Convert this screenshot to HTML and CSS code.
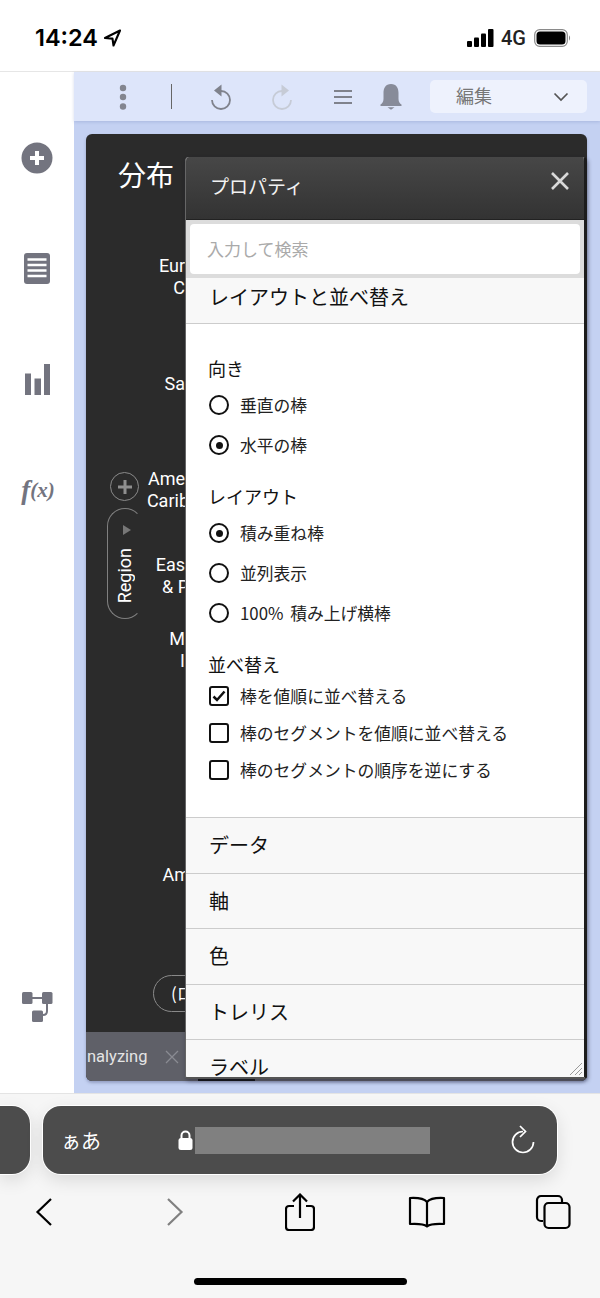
FILE: index.html
```html
<!DOCTYPE html>
<html lang="ja">
<head>
    <meta charset="utf-8">
    <title>プロパティ</title>
    <link rel="stylesheet" href="styles.css">
</head>
<body>
    <!-- status bar -->
    <div class="status-bar">
        <div class="status-time">
            <span>14:24</span>
            <svg width="19" height="18" viewBox="0 0 19 18"><path d="M17 1.500 2 9l7.500 .6L10.500 16.500Z" fill="none" stroke="#000" stroke-width="2.100" stroke-linejoin="round"/></svg>
        </div>
        <div class="status-right">
            <svg width="27" height="18" viewBox="0 0 27 18"><rect x="0" y="12" width="5" height="6" rx="1"/><rect x="7" y="8.500" width="5" height="9.500" rx="1"/><rect x="14" y="4.500" width="5" height="13.500" rx="1"/><rect x="21" y="0" width="5.500" height="18" rx="1"/></svg>
            <span class="status-net">4G</span>
            <svg width="37" height="18" viewBox="0 0 37 18"><rect x=".7" y=".7" width="32.600" height="16.600" rx="5" fill="none" stroke="#8a8a8a" stroke-width="1.200"/><rect x="2.500" y="2.500" width="29" height="13" rx="3.500"/><path d="M35 6.500c1.400 .6 1.400 4.400 0 5Z" fill="#8a8a8a"/></svg>
        </div>
    </div>

    <div class="app">
        <!-- left rail -->
        <div class="sidebar">
            <div class="side-item">
                <svg width="32" height="32" viewBox="0 0 32 32"><circle cx="16" cy="16" r="15.500" fill="#73747f"/><path d="M16 9v14M9 16h14" stroke="#fff" stroke-width="4"/></svg>
            </div>
            <div class="side-item">
                <svg width="26" height="31" viewBox="0 0 26 31"><rect width="26" height="31" rx="3" fill="#73747f"/><path d="M3.500 6.500h19M3.500 12h19M3.500 17.500h19M3.500 23h19" stroke="#fff" stroke-width="2.600"/></svg>
            </div>
            <div class="side-item">
                <svg width="25" height="31" viewBox="0 0 25 31"><path d="M0 9.500h6V31H0ZM9.500 14.500h6.500V31H9.500ZM19 0h6v31h-6Z" fill="#73747f"/></svg>
            </div>
            <div class="side-item fx"><i class="fx-f">f</i><i class="fx-x">(x)</i></div>
            <div class="side-item side-bottom">
                <svg width="32" height="32" viewBox="0 0 32 32"><g fill="#73747f"><rect x="1" y="0" width="10.500" height="12" rx="1.500"/><rect x="21" y="0" width="10.500" height="12" rx="1.500"/><rect x="11" y="18.500" width="11" height="11.500" rx="1.500"/></g><path d="M11 6h10M26 11v8q0 4-4 4" fill="none" stroke="#73747f" stroke-width="2"/></svg>
            </div>
        </div>

        <div class="workspace">
            <!-- toolbar -->
            <div class="toolbar">
                <div class="tool">
                    <svg width="10" height="26" viewBox="0 0 10 26"><circle cx="5" cy="4" r="3.200"/><circle cx="5" cy="13" r="3.200"/><circle cx="5" cy="22.500" r="3.200"/></svg>
                </div>
                <div class="tool"><div class="tool-sep"></div></div>
                <div class="tool">
                    <svg width="24" height="26" viewBox="0 0 24 26"><path d="M12 7a9 9 0 1 1-9 9" fill="none" stroke="#7f828c" stroke-width="1.800"/><path d="M12.500 .5v12L5 6.500Z" fill="#7f828c"/></svg>
                </div>
                <div class="tool">
                    <svg width="24" height="26" viewBox="0 0 24 26"><path d="M12 7a9 9 0 1 0 9 9" fill="none" stroke="#c6cbd6" stroke-width="1.800"/><path d="M11.500 .5v12L19 6.500Z" fill="#c6cbd6"/></svg>
                </div>
                <div class="tool">
                    <svg width="18" height="16" viewBox="0 0 18 16"><path d="M0 2h18M0 8h18M0 14h18" stroke="#7f828c" stroke-width="2"/></svg>
                </div>
                <div class="tool">
                    <svg width="22" height="26" viewBox="0 0 22 26"><path d="M11 0C5.500 0 3.500 4 3.500 9v6c0 3-1.500 4.500-3 5.500V22h21v-1.500c-1.500-1-3-2.500-3-5.500V9C18.500 4 16.500 0 11 0Z" fill="#878b99"/><path d="M7.500 23.200h7L11 25.800Z" fill="#878b99"/></svg>
                </div>
                <div class="mode-select">
                    <span>編集</span>
                    <svg width="16" height="10" viewBox="0 0 16 10"><path d="M1.500 1.500 8 8l6.500-6.500" fill="none" stroke="#555" stroke-width="1.700"/></svg>
                </div>
            </div>

            <!-- chart panel behind the dialog -->
            <div class="panel">
                <div class="chart">
                    <div class="chart-title">分布</div>
                    <div class="chart-row">
                        <div class="axis-col">
                            <div class="axis-add">
                                <svg width="14" height="14" viewBox="0 0 14 14"><path d="M7 0v14M0 7h14" stroke="#8f8f8f" stroke-width="3"/></svg>
                            </div>
                            <div class="axis-pill">
                                <span class="axis-arrow"></span>
                                <span class="axis-name">Region</span>
                            </div>
                        </div>
                        <div class="cats">
                            <div class="cat cat-1">Eur<br>C</div>
                            <div class="cat cat-2">Sa</div>
                            <div class="cat cat-3">Ame<br><span class="cut">Carib</span></div>
                            <div class="cat cat-4">Eas<br><span class="cut">&amp; P</span></div>
                            <div class="cat cat-5">M<br>I</div>
                            <div class="cat cat-6">Am</div>
                        </div>
                    </div>
                    <div class="legend-pill">(ロ</div>
                </div>
                <div class="tab-strip">
                    <span class="tab-name">nalyzing</span>
                    <svg width="14" height="14" viewBox="0 0 14 14"><path d="M1 1l12 12M13 1 1 13" stroke="#8a8b92" stroke-width="1.300"/></svg>
                    <div class="tab-mark"></div>
                </div>
            </div>

            <!-- properties dialog -->
            <div class="dialog">
                <div class="dialog-head">
                    <span>プロパティ</span>
                    <svg width="20" height="20" viewBox="0 0 20 20"><path d="M2 2l16 16M18 2 2 18" stroke="#d8d8d8" stroke-width="2.600"/></svg>
                </div>
                <div class="dialog-search">
                    <input type="text" placeholder="入力して検索">
                </div>
                <div class="section-row section-open">レイアウトと並べ替え</div>
                <div class="section-body">
                    <div class="group-title">向き</div>
                    <div class="opt"><span class="radio"></span>垂直の棒</div>
                    <div class="opt"><span class="radio on"></span>水平の棒</div>

                    <div class="group-title">レイアウト</div>
                    <div class="opt"><span class="radio on"></span>積み重ね棒</div>
                    <div class="opt"><span class="radio"></span>並列表示</div>
                    <div class="opt"><span class="radio"></span>100% 積み上げ横棒</div>

                    <div class="group-title group-last">並べ替え</div>
                    <div class="opt opt-check">
                        <span class="check"><svg width="14" height="12" viewBox="0 0 14 12"><path d="M1.500 6.500 5 10l7.500-8.500" fill="none" stroke="#111" stroke-width="2.500"/></svg></span>棒を値順に並べ替える
                    </div>
                    <div class="opt opt-check"><span class="check"></span>棒のセグメントを値順に並べ替える</div>
                    <div class="opt opt-check"><span class="check"></span>棒のセグメントの順序を逆にする</div>
                </div>
                <div class="section-row">データ</div>
                <div class="section-row">軸</div>
                <div class="section-row">色</div>
                <div class="section-row">トレリス</div>
                <div class="section-row">ラベル</div>
                <svg class="grip" width="14" height="14" viewBox="0 0 14 14"><path d="M1 13 13 1M6 13l7-7M10 13l3-3" stroke="#9a9a9a" stroke-width="1"/></svg>
            </div>
        </div>
    </div>

    <!-- browser chrome -->
    <div class="browser">
        <div class="address-row">
            <div class="tab-peek"></div>
            <div class="address">
                <span class="address-aa">ぁあ</span>
                <svg class="address-lock" width="15" height="20" viewBox="0 0 15 20"><path d="M3.500 9V5.500a4 4 0 0 1 8 0V9" fill="none" stroke="#fff" stroke-width="2"/><rect x=".5" y="8" width="14" height="12" rx="2.500" fill="#fff"/></svg>
                <div class="address-url"></div>
                <svg class="address-reload" width="26" height="30" viewBox="0 0 26 30"><path d="M13 6.500a10.500 10.500 0 1 0 10.500 10.500" fill="none" stroke="#fff" stroke-width="1.700"/><path d="M10 1l5.500 5.500L10 12" fill="none" stroke="#fff" stroke-width="1.700"/></svg>
            </div>
        </div>
        <div class="nav-row">
            <div class="nav-cell">
                <svg width="18" height="30" viewBox="0 0 18 30"><path d="M16 2 2.500 15 16 28" fill="none" stroke="#000" stroke-width="2.200"/></svg>
            </div>
            <div class="nav-cell">
                <svg width="18" height="30" viewBox="0 0 18 30"><path d="M2 2l13.500 13L2 28" fill="none" stroke="#808080" stroke-width="2.200"/></svg>
            </div>
            <div class="nav-cell">
                <svg width="30" height="38" viewBox="0 0 30 38"><path d="M9 13H4a3 3 0 0 0-3 3v18a3 3 0 0 0 3 3h22a3 3 0 0 0 3-3V16a3 3 0 0 0-3-3h-5M15 25V2M8 8.500 15 1.500l7 7" fill="none" stroke="#000" stroke-width="2.200"/></svg>
            </div>
            <div class="nav-cell">
                <svg width="38" height="32" viewBox="0 0 38 32"><path d="M19 6C16 2.500 11 1.500 2 2v26c9-.5 14 0 17 2.500 3-2.500 8-3 17-2.500V2c-9-.5-14 .5-17 4ZM19 6v24" fill="none" stroke="#000" stroke-width="2.200" stroke-linejoin="round"/></svg>
            </div>
            <div class="nav-cell">
                <svg width="36" height="36" viewBox="0 0 36 36"><path d="M8 27H6a4 4 0 0 1-4-4V6a4 4 0 0 1 4-4h17a4 4 0 0 1 4 4v2" fill="none" stroke="#000" stroke-width="2.200"/><rect x="9.500" y="9" width="25" height="25" rx="4" fill="none" stroke="#000" stroke-width="2.200"/></svg>
            </div>
        </div>
        <div class="home-bar"></div>
    </div>
</body>
</html>
```

FILE: styles.css
```css
* { box-sizing: border-box; }
body {
    margin: 0;
    width: 600px;
    height: 1298px;
    overflow: hidden;
    background: #fff;
    font-family: "Noto Sans CJK JP", "Noto Sans", sans-serif;
    color: #111;
}

/* status bar */
.status-bar {
    height: 72px;
    border-bottom: 1px solid #e6e6e6;
    padding: 4px 29px 0 35px;
    display: flex;
    justify-content: space-between;
    align-items: center;
}
.status-time { display: flex; align-items: center; gap: 5px; font: 600 23.5px Inter, sans-serif; color: #000; }
.status-right { display: flex; align-items: center; gap: 7px; }
.status-net { font: 500 20px Roboto, sans-serif; color: #222; margin-right: 1px; }

/* app */
.app { display: flex; height: 1021px; }
.sidebar {
    width: 74px;
    background: #fff;
    padding: 30px 0 69px;
    display: flex;
    flex-direction: column;
}
.side-item { height: 111px; display: flex; align-items: center; justify-content: center; }
.side-item.side-bottom { margin-top: auto; height: 32px; }
.fx { font-family: "Liberation Serif", serif; color: #73747f; padding-left: 2px; }
.fx-f { font-size: 27px; font-weight: 700; }
.fx-x { font-size: 21px; font-weight: 700; }

.workspace { flex: 1; position: relative; background: #c4d1f2; }
.toolbar {
    height: 49px;
    background: #dde5fa;
    padding-left: 25px;
    display: grid;
    grid-template-columns: 48px 48px 52px 70px 52px 44px 157px;
    align-items: center;
    box-shadow: 0 1px 3px rgba(90, 110, 170, .25);
}
.tool { display: flex; justify-content: center; align-items: center; fill: #83858f; }
.tool-sep { width: 1px; height: 25px; background: #666; }
.mode-select {
    margin-left: 17px;
    width: 157px;
    height: 33px;
    background: #eef2fd;
    border-radius: 5px;
    padding: 0 18px 0 26px;
    display: flex;
    justify-content: space-between;
    align-items: center;
    font-size: 18px;
    color: #777;
}
.mode-select span { margin-bottom: 3px; }

/* chart panel */
.panel {
    margin: 13px 13px 12px 12px;
    height: 947px;
    background: #2b2b2b;
    border-radius: 6px;
    overflow: hidden;
    display: flex;
    flex-direction: column;
    box-shadow: 0 2px 3px rgba(60, 70, 110, .35);
    color: #fff;
}
.chart { flex: 1; display: flex; flex-direction: column; padding-bottom: 20px; }
.chart-title { padding: 18px 0 0 32px; height: 61px; font-size: 28px; line-height: 44px; }
.chart-row { display: flex; flex: 1; }
.axis-col { width: 55px; padding: 277px 0 0 21px; }
.axis-add {
    width: 29px;
    height: 29px;
    margin-left: 3px;
    border: 1px solid #8a8a8a;
    border-radius: 50%;
    display: flex;
    align-items: center;
    justify-content: center;
}
.axis-pill {
    margin-top: 7px;
    width: 36px;
    height: 111px;
    border: 1px solid #808080;
    border-right-color: transparent;
    border-radius: 18px;
    display: flex;
    flex-direction: column;
    align-items: center;
    padding-top: 16px;
    gap: 13px;
}
.axis-arrow { width: 0; height: 0; border-left: 8px solid #777; border-top: 5px solid transparent; border-bottom: 5px solid transparent; margin-left: 3px; }
.axis-name { writing-mode: vertical-rl; transform: rotate(180deg); font: 18px Roboto, sans-serif; margin-right: 2px; }
.cats { width: 44px; text-align: right; white-space: nowrap; font: 18px/22px Roboto, sans-serif; }
.cut { display: inline-block; margin-right: -4px; }
.cat-1 { margin-top: 60px; }
.cat-2 { margin-top: 74px; }
.cat-3 { margin-top: 73px; }
.cat-4 { margin-top: 42px; }
.cat-5 { margin-top: 30px; }
.cat-6 { margin-top: 192px; margin-right: -5px; }
.legend-pill {
    margin-left: 67px;
    width: 110px;
    height: 37px;
    border: 1px solid #8a8a8a;
    border-radius: 19px;
    padding-left: 17px;
    font: 17px/33px "Noto Sans CJK JP", sans-serif;
}
.tab-strip {
    height: 49px;
    background: #5f6068;
    display: flex;
    align-items: center;
    gap: 18px;
    position: relative;
    color: #e4e4e4;
    font: 16.5px Roboto, sans-serif;
}
.tab-name { margin-left: 1px; }
.tab-mark { position: absolute; left: 112px; bottom: 0; width: 57px; height: 3px; background: #111; }

/* dialog */
.dialog {
    position: absolute;
    left: 111px;
    top: 85px;
    width: 402px;
    height: 922px;
    border-left: 1px solid #666;
    border-right: 3px solid #1c1c1c;
    border-bottom: 2px solid #555;
    border-radius: 4px 4px 3px 3px;
    overflow: hidden;
    background: #fff;
    box-shadow: 1px 2px 4px rgba(30, 30, 50, .45);
}
.dialog-head {
    height: 63px;
    background: linear-gradient(#474747, #333);
    color: #f2f2f2;
    font-size: 19px;
    padding: 0 14px 6px 24px;
    display: flex;
    justify-content: space-between;
    align-items: center;
    border-bottom: 1px solid #222;
}
.dialog-head svg { margin-bottom: 9px; }
.dialog-search { height: 58px; background: #dcdcdc; padding: 4px; }
.dialog-search input {
    display: block;
    width: 100%;
    height: 50px;
    border: none;
    border-radius: 4px;
    padding: 0 17px 2px;
    font: 17px "Noto Sans CJK JP", sans-serif;
    background: #fff;
}
.dialog-search input::placeholder { color: #aaa; }
.section-row {
    height: 55.5px;
    background: #f8f8f8;
    border-bottom: 1px solid #ccc;
    padding-left: 23px;
    font-size: 20px;
    line-height: 54px;
    color: #111;
}
.section-open { height: 46px; line-height: 37px; }
.section-body {
    height: 494px;
    padding: 31px 0 0 23px;
    border-bottom: 1px solid #ccc;
    background: #fff;
}
.group-title { font-size: 18px; line-height: 26px; margin-bottom: 4px; margin-left: -1px; }
.group-last { margin-bottom: 0; }
.opt {
    height: 40px;
    display: flex;
    align-items: center;
    gap: 11px;
    font-size: 16.8px;
    word-spacing: 3px;
    color: #222;
}
.opt + .group-title { margin-top: 18px; }
.opt-check { height: 37px; }
.radio {
    width: 20px;
    height: 20px;
    border: 2px solid #111;
    border-radius: 50%;
    display: flex;
    align-items: center;
    justify-content: center;
}
.radio.on::after { content: ""; width: 7px; height: 7px; border-radius: 50%; background: #111; }
.check {
    width: 20px;
    height: 20px;
    border: 2px solid #111;
    border-radius: 3px;
    display: flex;
    align-items: center;
    justify-content: center;
}
.grip { position: absolute; right: 1px; bottom: 1px; }

/* browser chrome */
.browser { height: 205px; background: #f6f6f6; border-top: 1px solid #e4e4e4; padding-top: 12px; }
.address-row { display: flex; gap: 13px; height: 68px; }
.tab-peek {
    width: 30px;
    background: #4c4c4c;
    border-radius: 0 18px 18px 0;
    box-shadow: 0 0 0 1px #fff, 0 6px 18px rgba(0, 0, 0, .12);
}
.address {
    width: 514px;
    background: #4c4c4c;
    border-radius: 18px;
    box-shadow: 0 0 0 1px #fff, 0 6px 18px rgba(0, 0, 0, .12);
    display: flex;
    align-items: center;
    color: #fff;
    padding-left: 20px;
}
.address-aa { width: 115px; font-size: 20px; margin-left: -2px; margin-right: 2px; }
.address-lock { margin-right: 2px; }
.address-url { width: 235px; height: 27px; background: #808080; }
.address-reload { margin-left: 80px; }
.nav-row {
    padding: 19px 0 0 29px;
    display: grid;
    grid-template-columns: 131px 125px 127px 126px 30px;
    height: 86px;
}
.nav-cell { width: 30px; display: flex; justify-content: center; align-items: center; height: 38px; }
.nav-cell svg { flex: none; }
.home-bar { width: 213px; height: 7px; margin: 18px 0 0 194px; background: #000; border-radius: 4px; }
```
